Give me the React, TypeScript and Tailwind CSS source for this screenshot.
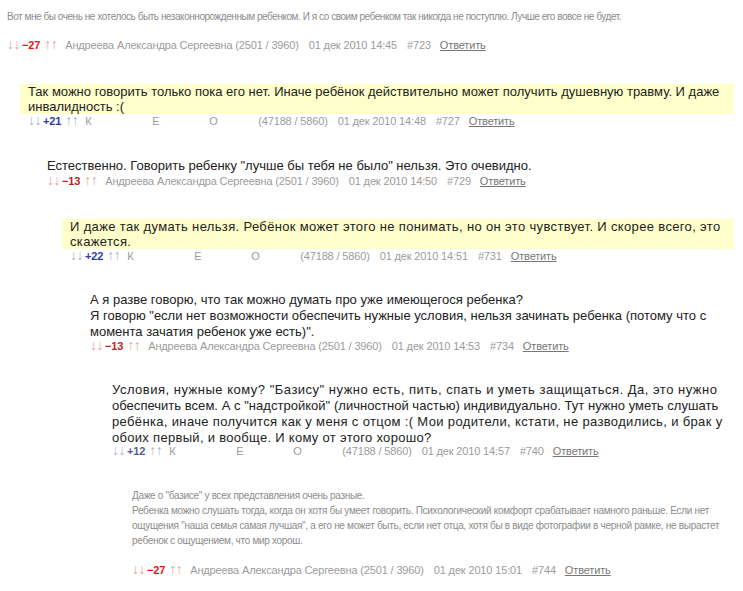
import React from "react";

type Score = { value: string; tone: "red" | "darkred" | "blue" | "grayblue" };

type Line = string | { text: string; cls: string };

type Comment = {
  level: number;
  small?: boolean;
  yellow?: boolean;
  lines: Line[];
  score: Score;
  author: "andreeva" | "hidden";
  date: string;
  num: string;
  mt: string;
  textCls: string;
  metaMt?: string;
};

const comments: Comment[] = [
  {
    level: 0,
    small: true,
    lines: [
      "Вот мне бы очень не хотелось быть незаконнорожденным ребенком. И я со своим ребенком так никогда не поступлю. Лучше его вовсе не будет.",
    ],
    score: { value: "−27", tone: "red" },
    author: "andreeva",
    date: "01 дек 2010 14:45",
    num: "#723",
    mt: "mt-[9px]",
    textCls: "leading-[15px] tracking-[-0.45px] mb-[14px]",
  },
  {
    level: 1,
    yellow: true,
    lines: [
      "Так можно говорить только пока его нет. Иначе ребёнок действительно может получить душевную травму. И даже инвалидность :(",
    ],
    score: { value: "+21", tone: "blue" },
    author: "hidden",
    date: "01 дек 2010 14:48",
    num: "#727",
    mt: "mt-[30px]",
    textCls: "leading-[15px]",
  },
  {
    level: 2,
    lines: ['Естественно. Говорить ребенку "лучше бы тебя не было" нельзя. Это очевидно.'],
    score: { value: "−13", tone: "darkred" },
    author: "andreeva",
    date: "01 дек 2010 14:50",
    num: "#729",
    mt: "mt-[28px]",
    textCls: "leading-[16px]",
  },
  {
    level: 3,
    yellow: true,
    lines: [
      "И даже так думать нельзя. Ребёнок может этого не понимать, но он это чувствует. И скорее всего, это скажется.",
    ],
    score: { value: "+22", tone: "blue" },
    author: "hidden",
    date: "01 дек 2010 14:51",
    num: "#731",
    mt: "mt-[29px]",
    textCls: "leading-[15px] tracking-[0.35px]",
  },
  {
    level: 4,
    lines: [
      "А я разве говорю, что так можно думать про уже имеющегося ребенка?",
      'Я говорю "если нет возможности обеспечить нужные условия, нельзя зачинать ребенка (потому что с момента зачатия ребенок уже есть)".',
    ],
    score: { value: "−13", tone: "darkred" },
    author: "andreeva",
    date: "01 дек 2010 14:53",
    num: "#734",
    mt: "mt-[27px]",
    textCls: "leading-[16px]",
    metaMt: "-mt-[1px]",
  },
  {
    level: 5,
    lines: [
      { text: 'Условия, нужные кому? "Базису" нужно есть, пить, спать и уметь защищаться. Да, это нужно', cls: "tracking-[0.5px]" },
      { text: 'обеспечить всем. А с "надстройкой" (личностной частью) индивидуально. Тут нужно уметь слушать', cls: "tracking-[0.03px]" },
      { text: "ребёнка, иначе получится как у меня с отцом :( Мои родители, кстати, не разводились, и брак у", cls: "tracking-[0.35px]" },
      { text: "обоих первый, и вообще. И кому от этого хорошо?", cls: "tracking-[0.3px]" },
    ],
    score: { value: "+12", tone: "grayblue" },
    author: "hidden",
    date: "01 дек 2010 14:57",
    num: "#740",
    mt: "mt-[27px]",
    textCls: "leading-[16px] whitespace-nowrap",
    metaMt: "-mt-[2px]",
  },
  {
    level: 6,
    small: true,
    lines: [
      'Даже о "базисе" у всех представления очень разные.',
      'Ребенка можно слушать тогда, когда он хотя бы умеет говорить. Психологический комфорт срабатывает намного раньше. Если нет ощущения "наша семья самая лучшая", а его не может быть, если нет отца, хотя бы в виде фотографии в черной рамке, не вырастет ребенок с ощущением, что мир хорош.',
    ],
    score: { value: "−27", tone: "red" },
    author: "andreeva",
    date: "01 дек 2010 15:01",
    num: "#744",
    mt: "mt-[28px]",
    textCls: "leading-[15px] tracking-[-0.3px] mb-[15px]",
  },
];

// indent per nesting level
const indents = ["ml-[7px]", "ml-[20px]", "ml-[47px]", "ml-[62px]", "ml-[90px]", "ml-[112px]", "ml-[132px]"];

const scoreColor = {
  red: "text-[#ee1111]",
  darkred: "text-[#b52626]",
  blue: "text-[#2e3ba8]",
  grayblue: "text-[#56608f]",
};

const arrowColor = {
  red: "text-[#eaa0a0]",
  darkred: "text-[#eaa0a0]",
  blue: "text-[#a9b3cc]",
  grayblue: "text-[#a9b3cc]",
};

function Meta({ c }: { c: Comment }) {
  return (
    <div
      className={
        "flex h-[16px] items-baseline whitespace-nowrap text-[11px] leading-[12px] tracking-[-0.15px] text-[#9c9c9c] " +
        (c.metaMt ?? "")
      }
    >
      <span className={"text-[14px] leading-[12px] tracking-[-0.5px] " + arrowColor[c.score.tone]}>↓↓</span>
      <span className={"ml-[2px] font-bold " + scoreColor[c.score.tone]}>{c.score.value}</span>
      <span className={"ml-[4px] text-[14px] leading-[12px] tracking-[-0.5px] " + arrowColor[c.score.tone]}>↑↑</span>
      {c.author === "andreeva" ? (
        <span className="ml-[8px]">Андреева Александра Сергеевна (2501 / 3960)</span>
      ) : (
        <span className="ml-[7px] flex">
          <span className="w-[67px]">К</span>
          <span className="w-[57px]">Е</span>
          <span className="w-[49px]">О</span>
          <span>(47188 / 5860)</span>
        </span>
      )}
      <span className="ml-[10px]">{c.date}</span>
      <span className="ml-[10px]">{c.num}</span>
      <span className="ml-[9px] text-[#777] underline">Ответить</span>
    </div>
  );
}

function CommentBlock({ c }: { c: Comment }) {
  const text = (
    <div
      className={
        (c.small ? "text-[10px] text-[#8c8c8c] " : "text-[13px] text-[#222] ") + c.textCls
      }
    >
      {c.lines.map((l, i) =>
        typeof l === "string" ? (
          <div key={i}>{l}</div>
        ) : (
          <div key={i} className={l.cls}>
            {l.text}
          </div>
        )
      )}
    </div>
  );

  return (
    <div className={c.mt + " " + indents[c.level]}>
      {c.yellow ? (
        <>
          <div className="bg-[#ffffcc] pl-[8px] pr-[6px]">{text}</div>
          <div className="pl-[8px]">
            <Meta c={c} />
          </div>
        </>
      ) : (
        <>
          {text}
          <Meta c={c} />
        </>
      )}
    </div>
  );
}

export default function App() {
  return (
    <div className="min-h-[591px] w-[743px] bg-white pr-[9px] font-['Liberation_Sans',Arial,sans-serif]">
      {comments.map((c, i) => (
        <CommentBlock key={i} c={c} />
      ))}
    </div>
  );
}
